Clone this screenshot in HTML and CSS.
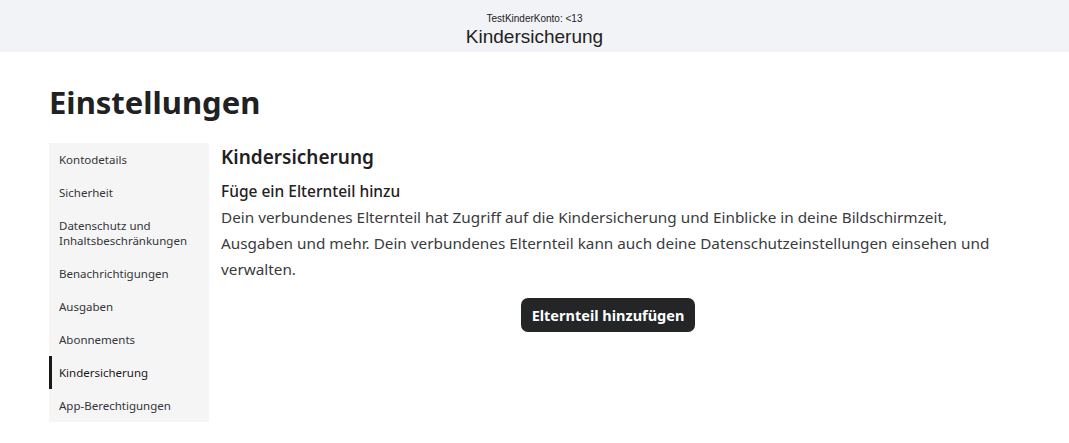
FILE: index.html
```html
<!DOCTYPE html>
<html lang="de">
<head>
    <meta charset="UTF-8">
    <meta name="viewport" content="width=device-width, initial-scale=1.0">
    <title>Einstellungen</title>
    <link rel="stylesheet" href="styles.css">
</head>
<body>
    <header class="topbar">
        <div class="account">TestKinderKonto: &lt;13</div>
        <div class="page-title">Kindersicherung</div>
    </header>

    <main class="settings">
        <h1>Einstellungen</h1>

        <div class="layout">
            <nav class="menu">
                <a href="#">Kontodetails</a>
                <a href="#">Sicherheit</a>
                <a href="#">Datenschutz und Inhaltsbeschränkungen</a>
                <a href="#">Benachrichtigungen</a>
                <a href="#">Ausgaben</a>
                <a href="#">Abonnements</a>
                <a href="#" class="active">Kindersicherung</a>
                <a href="#">App-Berechtigungen</a>
            </nav>

            <section class="panel">
                <h2>Kindersicherung</h2>
                <h3>Füge ein Elternteil hinzu</h3>
                <p>Dein verbundenes Elternteil hat Zugriff auf die Kindersicherung und Einblicke in deine Bildschirmzeit, Ausgaben und mehr. Dein verbundenes Elternteil kann auch deine Datenschutzeinstellungen einsehen und verwalten.</p>
                <div class="actions">
                    <button>Elternteil hinzufügen</button>
                </div>
            </section>
        </div>
    </main>
</body>
</html>
```

FILE: styles.css
```css
/* Page basics */
body {
    margin: 0;
    font-family: "Noto Sans", "Liberation Sans", sans-serif;
    color: #393b3d;
    background: #fff;
}

/* Top bar with account name */
.topbar {
    height: 52px;
    background: #f2f3f7;
    text-align: center;
    font-family: "Liberation Sans", Arial, sans-serif;
    color: #222;
}

.account {
    font-size: 10px;
    padding-top: 13px;
    line-height: 12px;
}

.page-title {
    font-size: 19px;
    line-height: 24px;
}

.settings {
    padding: 0 74px 0 49px;
}

h1 {
    margin: 29px 0 20px;
    font-size: 31px;
    line-height: 42px;
    font-weight: 700;
    color: #1f2123;
}

.layout {
    display: flex;
    gap: 12px;
}

/* Left menu */
.menu {
    width: 160px;
    flex-shrink: 0;
    background: #f5f5f5;
    display: flex;
    flex-direction: column;
    align-self: flex-start;
}

.menu a {
    display: block;
    padding: 9px 10px;
    font-size: 11.5px;
    line-height: 15px;
    color: #33353a;
    text-decoration: none;
}

.menu a.active {
    box-shadow: inset 3px 0 0 #191919;
    color: #191919;
}

/* Right panel */
.panel {
    flex: 1;
}

h2 {
    margin: 2px 0 11px;
    font-size: 19px;
    line-height: 24px;
    font-weight: 600;
    color: #1f2123;
}

h3 {
    margin: 0 0 2px;
    font-size: 15.5px;
    line-height: 22px;
    font-weight: 500;
    color: #1f2123;
}

p {
    margin: 0;
    font-size: 15.3px;
    line-height: 26px;
    color: #393b3d;
}

.actions {
    text-align: center;
    margin-top: 16px;
}

button {
    padding: 7px 11px;
    font-family: inherit;
    font-size: 14.5px;
    font-weight: 700;
    line-height: 20px;
    background-color: #232527;
    color: #fff;
    border: none;
    border-radius: 7px;
    cursor: pointer;
}
```
